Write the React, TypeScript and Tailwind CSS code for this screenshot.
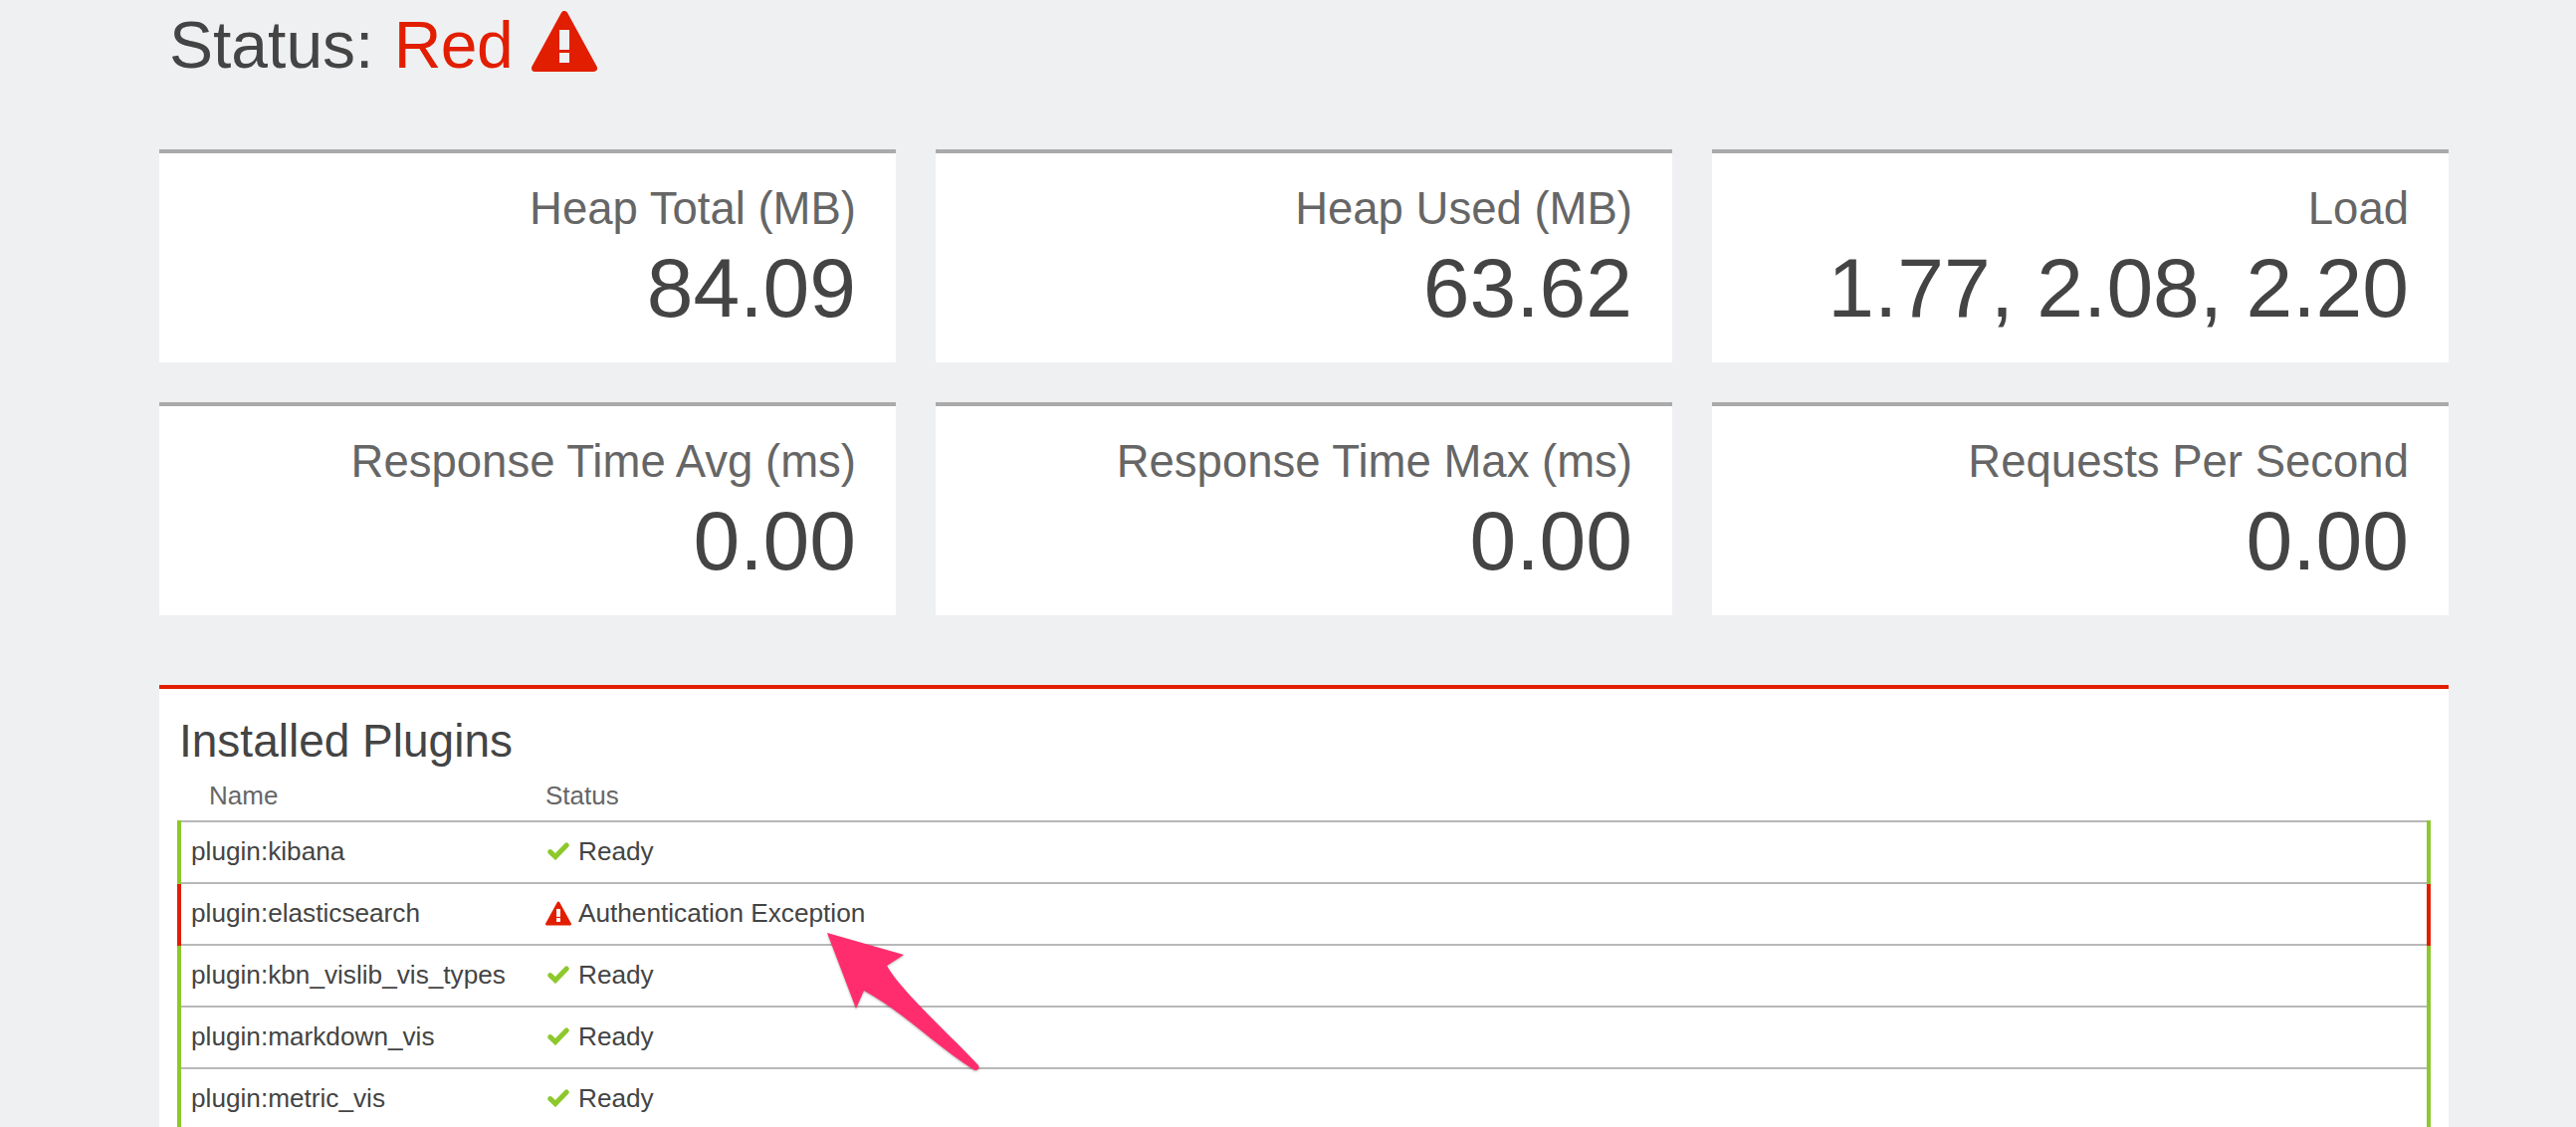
const RED = "#e21e00";

function Warning({ className, hole }: { className: string; hole: string }) {
  return (
    <svg viewBox="0 0 66 61" className={className}>
      <path d="M33 3.5 L62.5 57.5 L3.5 57.5 Z" fill={RED} stroke={RED} strokeWidth="7" strokeLinejoin="round" />
      <rect x="28" y="19" width="10" height="20" fill={hole} />
      <rect x="28" y="42" width="10" height="10" fill={hole} />
    </svg>
  );
}

function Check() {
  return (
    <svg viewBox="0 0 22 18" className="w-[22px] h-[18px] shrink-0">
      <path d="M2.8 9.6 L8 14.6 L19.2 3" fill="none" stroke="#8dc82c" strokeWidth="5" strokeLinecap="round" strokeLinejoin="miter" />
    </svg>
  );
}

function Card({ label, value }: { label: string; value: string }) {
  return (
    <div className="h-[214px] bg-white border-t-4 border-[#aaaaaa] pr-10 pt-[28px] text-right">
      <div className="text-[45.5px] leading-[56px] text-[#666666]">{label}</div>
      <div className="text-[84px] leading-[102px] text-[#444444]">{value}</div>
    </div>
  );
}

const rows = [
  { name: "plugin:kibana", status: "Ready", ok: true },
  { name: "plugin:elasticsearch", status: "Authentication Exception", ok: false },
  { name: "plugin:kbn_vislib_vis_types", status: "Ready", ok: true },
  { name: "plugin:markdown_vis", status: "Ready", ok: true },
  { name: "plugin:metric_vis", status: "Ready", ok: true },
];

const cards = [
  ["Heap Total (MB)", "84.09"],
  ["Heap Used (MB)", "63.62"],
  ["Load", "1.77, 2.08, 2.20"],
  ["Response Time Avg (ms)", "0.00"],
  ["Response Time Max (ms)", "0.00"],
  ["Requests Per Second", "0.00"],
];

export default function App() {
  return (
    <div className="relative h-screen overflow-hidden bg-[#eff0f2] pl-[160px] pr-[128px] text-[#444444] font-['Liberation_Sans',Arial,sans-serif]">
      <h1 className="h-[150px] pl-[10px] pt-[8px] flex items-start gap-[19px] text-[66px] leading-[74px] font-normal">
        <span>
          Status: <span className="ml-[2px] text-[#e21e00] tracking-[-0.6px]">Red</span>
        </span>
        <Warning className="w-[66px] h-[61px] mt-[3px]" hole="#eff0f2" />
      </h1>

      <div className="grid grid-cols-3 gap-10">
        {cards.map(([l, v]) => (
          <Card key={l} label={l} value={v} />
        ))}
      </div>

      <section className="mt-[70px] h-[600px] bg-white border-t-4 border-[#e21e00] px-[18px]">
        <h2 className="pt-[24px] h-[86px] pl-[2px] text-[46px] leading-[56px] font-normal">Installed Plugins</h2>
        <div className="flex h-[46px] items-center text-[26px] text-[#666666] pb-[3px]">
          <div className="w-[370px] pl-[32px]">Name</div>
          <div>Status</div>
        </div>
        {rows.map((r, i) => (
          <div key={r.name} className={r.ok ? "border-x-4 border-[#8dc82c]" : "border-x-4 border-[#e21e00]"}>
            <div
              className={
                i === 0
                  ? "flex items-center h-[64px] border-y-2 border-[#b8b8b8] text-[26.2px] pb-[1px]"
                  : "flex items-center h-[62px] border-b-2 border-[#b8b8b8] text-[26.2px] pb-[1px]"
              }
            >
              <div className="w-[366px] pl-[10px]">{r.name}</div>
              <div className="flex items-center">
                {r.ok ? (
                  <span className="w-[33px] pl-[2px]">
                    <Check />
                  </span>
                ) : (
                  <span className="w-[33px]">
                    <Warning className="w-[26px] h-[25px]" hole="#ffffff" />
                  </span>
                )}
                <span>{r.status}</span>
              </div>
            </div>
          </div>
        ))}
      </section>

      <svg className="absolute left-[820px] top-[925px] w-[180px] h-[165px]" viewBox="820 925 180 165">
        <path
          d="M831 937 L908 959 L891 970 C905 995 950 1035 983 1070 Q985 1075 979 1075 C940 1050 905 1015 868 995 L860 1013 Z"
          fill="#ff2d6e"
          style={{ filter: "drop-shadow(0 1px 1px rgba(0,0,0,0.3))" }}
        />
      </svg>
    </div>
  );
}
